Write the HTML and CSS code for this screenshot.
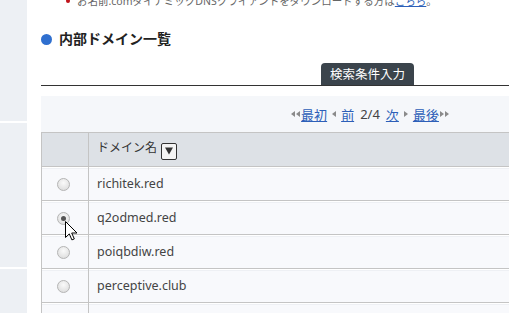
FILE: index.html
```html
<!DOCTYPE html>
<html lang="ja">
<head>
    <meta charset="UTF-8">
    <meta name="viewport" content="width=device-width, initial-scale=1.0">
    <title>内部ドメイン一覧</title>
    <link rel="stylesheet" href="styles.css">
</head>
<body>
<div class="page">
    <aside class="side">
        <div class="side-block first"></div>
        <div class="side-block second"></div>
        <div class="side-block third"></div>
    </aside>

    <main class="main">
        <ul class="notes">
            <li>お名前.comダイナミックDNSクライアントをダウンロードする方は<a href="#">こちら</a>。</li>
        </ul>

        <h2 class="sec-title"><span class="dot"></span>内部ドメイン一覧</h2>

        <div class="tabs">
            <span class="tab">検索条件入力</span>
        </div>

        <div class="pager">
            <span class="arr"><svg width="9" height="6" viewBox="0 0 9 6"><path d="M4 0v6L0 3z M9 0v6L5 3z" fill="#8a8a8a"/></svg></span><a href="#">最初</a>
            <span class="arr single"><svg width="4" height="6" viewBox="0 0 4 6"><path d="M4 0v6L0 3z" fill="#8a8a8a"/></svg></span><a href="#">前</a>
            <span class="count">2/4</span>
            <a href="#">次</a><span class="arr single"><svg width="4" height="6" viewBox="0 0 4 6"><path d="M0 0v6l4-3z" fill="#8a8a8a"/></svg></span>
            <a href="#">最後</a><span class="arr"><svg width="9" height="6" viewBox="0 0 9 6"><path d="M0 0v6l4-3z M5 0v6l4-3z" fill="#8a8a8a"/></svg></span>
        </div>

        <table class="domains">
            <tr>
                <th class="sel"></th>
                <th>ドメイン名 <span class="sort"><svg width="8" height="8" viewBox="0 0 8 8"><path d="M0 0.5h8L4 7.5z" fill="#333"/></svg></span></th>
            </tr>
            <tr><td class="sel"><input type="radio" name="dom"></td><td>richitek.red</td></tr>
            <tr><td class="sel"><input type="radio" name="dom" checked></td><td>q2odmed.red</td></tr>
            <tr><td class="sel"><input type="radio" name="dom"></td><td>poiqbdiw.red</td></tr>
            <tr><td class="sel"><input type="radio" name="dom"></td><td>perceptive.club</td></tr>
            <tr><td class="sel"><input type="radio" name="dom"></td><td>&nbsp;</td></tr>
        </table>

        <svg class="cursor" width="13" height="20" viewBox="0 0 13 20">
            <path d="M0.5 0.5v16l3.8-3.6 2.6 6 2.4-1-2.6-5.9h5.3z" fill="#fff" stroke="#000" stroke-width="1" stroke-linejoin="round"/>
        </svg>
    </main>
</div>
</body>
</html>
```

FILE: styles.css
```css
html, body {
    margin: 0;
    padding: 0;
    height: 100%;
    overflow: hidden;
}
body {
    font-family: "Noto Sans", "Noto Sans CJK JP", sans-serif;
    color: #444;
    background-color: #fff;
}
.page {
    display: flex;
    height: 100%;
}
.side {
    width: 27px;
    flex: none;
    display: flex;
    flex-direction: column;
    gap: 2px;
}
.side-block {
    background-color: #edf0f4;
}
.side-block.first {
    height: 121px;
}
.side-block.second {
    height: 144px;
}
.side-block.third {
    flex: 1;
}
.main {
    position: relative;
    padding-left: 14px;
    width: 656px;
    flex: none;
}
.notes {
    list-style: none;
    margin: -8px 0 0;
    padding: 0 0 0 25px;
    font-size: 10.5px;
    line-height: 18px;
    color: #666;
}
.notes li::before {
    content: "";
    display: inline-block;
    width: 4px;
    height: 4px;
    border-radius: 50%;
    background-color: #c0141b;
    margin-right: 7px;
    vertical-align: 2px;
}
.notes a {
    color: #2d5fb8;
}
.sec-title {
    display: flex;
    align-items: center;
    margin: 19px 0 0;
    font-size: 14px;
    line-height: 20px;
    color: #222;
    font-weight: bold;
}
.sec-title .dot {
    width: 11px;
    height: 11px;
    border-radius: 50%;
    background-color: #2f6fcf;
    margin-right: 7px;
}
.tabs {
    margin-top: 14px;
    display: flex;
    justify-content: center;
    border-bottom: 1px solid #333;
    padding-right: 3px;
}
.tab {
    width: 93px;
    height: 22px;
    line-height: 23px;
    text-align: center;
    background-color: #3b444c;
    color: #fff;
    font-size: 12.5px;
    border-radius: 4px 4px 0 0;
}
.pager {
    margin-top: 10px;
    height: 36px;
    background-color: #f5f7fa;
    display: flex;
    align-items: center;
    justify-content: center;
    font-size: 13px;
    padding-left: 2px;
}
.pager a {
    color: #2d5fb8;
}
.pager .arr {
    display: inline-flex;
    align-items: center;
    margin: 0 1px;
}
.pager .arr.single {
    margin: 0 5px;
}
.pager .count {
    margin: 0 6px;
    color: #444;
}
.domains {
    width: 100%;
    border-collapse: collapse;
    font-size: 12.5px;
}
.domains th, .domains td {
    height: 32px;
    padding: 0 0 1px 8px;
    text-align: left;
    border: 1px solid #c4c4c4;
}
.domains th {
    background-color: #dde1e6;
    font-weight: normal;
    color: #333;
    font-size: 12px;
}
.domains td {
    background-color: #f8f9fc;
    box-shadow: inset 0 1px 0 #fff, inset 0 2px 0 #eef0f4;
}
.domains .sel {
    width: 46px;
    padding: 0;
    text-align: center;
}
.sort {
    display: inline-flex;
    align-items: center;
    justify-content: center;
    width: 14px;
    height: 15px;
    border: 1px solid #333;
    border-radius: 2px;
    background-color: #f4f4f4;
    vertical-align: -3px;
    margin-left: 1px;
}
.domains input[type="radio"] {
    appearance: none;
    -webkit-appearance: none;
    width: 13px;
    height: 13px;
    margin: 0 0 0 -3px;
    border: 1px solid #b5b5b5;
    border-radius: 50%;
    background: radial-gradient(circle at 50% 35%, #fafafa, #d8d8d8);
    vertical-align: middle;
    position: relative;
}
.domains input[type="radio"]:checked::after {
    content: "";
    position: absolute;
    left: 3px;
    top: 3px;
    width: 5px;
    height: 5px;
    border-radius: 50%;
    background-color: #555;
}
.cursor {
    position: absolute;
    left: 38px;
    top: 221px;
}
```
